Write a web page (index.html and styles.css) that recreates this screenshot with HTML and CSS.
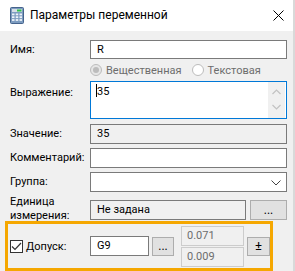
FILE: index.html
```html
<!DOCTYPE html>
<html lang="ru">
<head>
<meta charset="utf-8">
<link rel="stylesheet" href="styles.css">
</head>
<body>
<div class="win">
  <div class="titlebar">
    <svg class="app-icon" width="14" height="17" viewBox="0 0 14 17">
      <rect x="0.5" y="0.5" width="13" height="16" rx="1" fill="#7d9cc0" stroke="#45638c"/>
      <rect x="2" y="2" width="10" height="3" fill="#d6dde6"/>
      <rect x="7" y="2.5" width="4.5" height="2" fill="#2fc24a"/>
      <g fill="#eef3f9">
        <rect x="2" y="6.5" width="2.5" height="1.8"/><rect x="5.75" y="6.5" width="2.5" height="1.8"/><rect x="9.5" y="6.5" width="2.5" height="1.8"/>
        <rect x="2" y="9.3" width="2.5" height="1.8"/><rect x="5.75" y="9.3" width="2.5" height="1.8"/><rect x="9.5" y="9.3" width="2.5" height="1.8"/>
        <rect x="2" y="12.1" width="2.5" height="1.8"/><rect x="5.75" y="12.1" width="2.5" height="1.8"/><rect x="9.5" y="12.1" width="2.5" height="1.8"/>
      </g>
    </svg>
    <span class="title">Параметры переменной</span>
    <svg class="close" width="11" height="11" viewBox="0 0 11 11">
      <path d="M0.5 0.5 L10.5 10.5 M10.5 0.5 L0.5 10.5" stroke="#000" stroke-width="1"/>
    </svg>
  </div>
  <div class="body">
    <div class="row r-name">
      <label class="lbl">Имя:</label>
      <div class="field">R</div>
    </div>
    <div class="row r-radio">
      <span></span>
      <div class="radios">
        <span class="radio checked"></span><span class="rtext">Вещественная</span>
        <span class="radio"></span><span class="rtext">Текстовая</span>
      </div>
    </div>
    <div class="row r-expr">
      <label class="lbl top">Выражение:</label>
      <div class="field area">
        <span class="caret"></span><span class="atext">35</span>
        <div class="sb">
          <svg width="9" height="6" viewBox="0 0 9 6"><path d="M0.5 5 L4.5 1 L8.5 5" fill="none" stroke="#c2c2c2" stroke-width="1.2"/></svg>
          <svg width="9" height="6" viewBox="0 0 9 6"><path d="M0.5 1 L4.5 5 L8.5 1" fill="none" stroke="#c2c2c2" stroke-width="1.2"/></svg>
        </div>
      </div>
    </div>
    <div class="row r-value">
      <label class="lbl">Значение:</label>
      <div class="field ro">35</div>
    </div>
    <div class="row r-comment">
      <label class="lbl">Комментарий:</label>
      <div class="field"></div>
    </div>
    <div class="row r-group">
      <label class="lbl">Группа:</label>
      <div class="field combo">
        <svg width="10" height="6" viewBox="0 0 10 6"><path d="M0.5 0.5 L5 5 L9.5 0.5" fill="none" stroke="#444" stroke-width="1"/></svg>
      </div>
    </div>
    <div class="row r-unit">
      <label class="lbl two">Единица<br>измерения:</label>
      <div class="unit-line">
        <div class="field ro unit">Не задана</div>
        <button class="btn dots">...</button>
      </div>
    </div>
    <div class="tol">
      <div class="tol-check">
        <span class="cb">
          <svg width="11" height="9" viewBox="0 0 11 9"><path d="M1 4.5 L4 7.5 L10 1" fill="none" stroke="#333" stroke-width="1.2"/></svg>
        </span>
        <span class="cbtext">Допуск:</span>
      </div>
      <div class="field g9">G9</div>
      <button class="btn small">...</button>
      <div class="devs">
        <div class="dev">0.071</div>
        <div class="dev">0.009</div>
      </div>
      <button class="btn pm">±</button>
    </div>
  </div>
</div>
</body>
</html>
```
FILE: styles.css
```css
* { box-sizing: border-box; }
html, body { margin: 0; padding: 0; }
body {
  width: 295px;
  height: 271px;
  overflow: hidden;
  background: #d9d9d9;
  font-family: Roboto, "Liberation Sans", sans-serif;
  font-size: 11px;
  color: #000;
}
.win {
  width: 293px;
  height: 271px;
  background: #f0f0f0;
}
.titlebar {
  height: 31px;
  background: #fff;
  display: flex;
  align-items: center;
  padding-left: 10px;
}
.app-icon { margin-top: -1px; }
.title {
  margin-left: 6px;
  font-size: 12px;
  flex: 1;
  margin-top: -1px;
}
.close { margin-right: 9px; margin-top: -1px; }
.body {
  padding: 9px 6px 0 5px;
  display: flex;
  flex-direction: column;
}
.row {
  display: grid;
  grid-template-columns: 85px 1fr;
  align-items: center;
}
.lbl { padding-left: 5px; line-height: 14px; }
.lbl.top { align-self: start; padding-top: 5px; }
.lbl.two { margin: -5px 0 -3px; line-height: 14px; }
.field {
  height: 20px;
  border: 1px solid #7a7a7a;
  background: #fff;
  padding: 0 6px;
  line-height: 18px;
  position: relative;
}
.field.ro { background: #f0f0f0; }
.r-name .field { height: 19px; line-height: 17px; }
.r-radio { margin-top: 3px; height: 17px; }
.radios { display: flex; align-items: center; color: #6d6d6d; margin-top: -1px; }
.radio {
  width: 12px; height: 12px;
  border-radius: 50%;
  border: 1px solid #bcbcbc;
  background: #fff;
  margin-right: 4px;
  position: relative;
}
.radio.checked { background: #e6e6e6; border-color: #bcbcbc; }
.radio.checked::after {
  content: "";
  position: absolute;
  left: 2px; top: 2px;
  width: 6px; height: 6px;
  border-radius: 50%;
  background: #bcbcbc;
}
.rtext { margin-right: 10px; }
.r-expr { margin-top: 2px; }
.field.area {
  height: 38px;
  border-color: #0078d7;
  padding: 2px 0 0 5px;
  line-height: 16px;
}
.caret {
  display: inline-block;
  width: 1px; height: 13px;
  background: #000;
  vertical-align: -2px;
}
.sb {
  position: absolute;
  right: 1px; top: 0; bottom: 0;
  width: 17px;
  background: #f0f0f0;
  display: flex;
  flex-direction: column;
  align-items: center;
  justify-content: space-between;
  padding: 7px 0 8px;
}
.r-value { margin-top: 5px; }
.r-comment { margin-top: 4px; }
.r-group { margin-top: 4px; }
.combo svg { position: absolute; right: 5px; top: 7px; }
.r-unit { margin-top: 8px; }
.unit-line { display: flex; gap: 4px; }
.unit { flex: 1; }
.btn {
  font-family: inherit;
  font-size: 12px;
  background: #e1e1e1;
  border: 1px solid #adadad;
  padding: 0;
  margin: 0;
  color: #000;
  height: 20px;
  line-height: 16px;
}
.btn.dots { width: 37px; }
.tol {
  margin-top: 1px;
  width: 268px;
  height: 50px;
  border: 3px solid #f5a700;
  display: flex;
  align-items: center;
  padding: 0 0 0 2px;
}
.tol-check { width: 80px; display: flex; align-items: center; }
.cb {
  width: 13px; height: 13px;
  border: 1px solid #333;
  background: #fff;
  display: flex;
  align-items: center;
  justify-content: center;
}
.cbtext { margin-left: 3px; }
.field.g9 { width: 59px; height: 20px; }
.btn.small { width: 22px; height: 19px; margin-left: 3px; }
.devs { margin-left: 7px; display: flex; flex-direction: column; gap: 1px; margin-top: 1px; }
.dev {
  width: 63px; height: 20px;
  border: 1px solid #cccccc;
  background: #f0f0f0;
  color: #6d6d6d;
  padding: 0 5px;
  line-height: 18px;
}
.btn.pm { width: 23px; height: 19px; margin-left: 3px; font-size: 13px; }
```
